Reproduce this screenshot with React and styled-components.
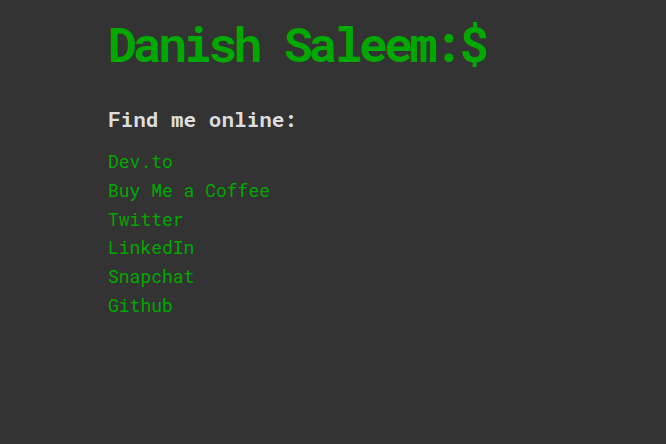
import React from "react";
import styled, { createGlobalStyle } from "styled-components";

const GlobalStyle = createGlobalStyle`
  html, body {
    margin: 0;
    padding: 0;
    background: #333333;
    height: 100%;
  }
  body {
    font-family: "Roboto Mono", "DejaVu Sans Mono", "Liberation Mono", monospace;
  }
`;

const Page = styled.main`
  max-width: 450px;
  margin: 0 auto;
  padding-top: 14px;
`;

const Title = styled.h1`
  margin: 0;
  color: #00a800;
  font-size: 48px;
  font-weight: 700;
  letter-spacing: -3.7px;
  line-height: 59px;
`;

const Heading = styled.h2`
  margin: 32px 0 14px;
  color: #dddddd;
  font-size: 21px;
  font-weight: 700;
`;

const LinkList = styled.ul`
  list-style: none;
  margin: 0;
  padding: 0;
`;

const Link = styled.a`
  display: block;
  color: #00a800;
  font-size: 18px;
  line-height: 1.6;
  text-decoration: none;
`;

const links = [
  "Dev.to",
  "Buy Me a Coffee",
  "Twitter",
  "LinkedIn",
  "Snapchat",
  "Github",
];

export default function App() {
  return (
    <>
      <GlobalStyle />
      <Page>
        <Title>Danish Saleem:$</Title>
        <Heading>Find me online:</Heading>
        <LinkList>
          {links.map((name) => (
            <li key={name}>
              <Link href="#">{name}</Link>
            </li>
          ))}
        </LinkList>
      </Page>
    </>
  );
}
